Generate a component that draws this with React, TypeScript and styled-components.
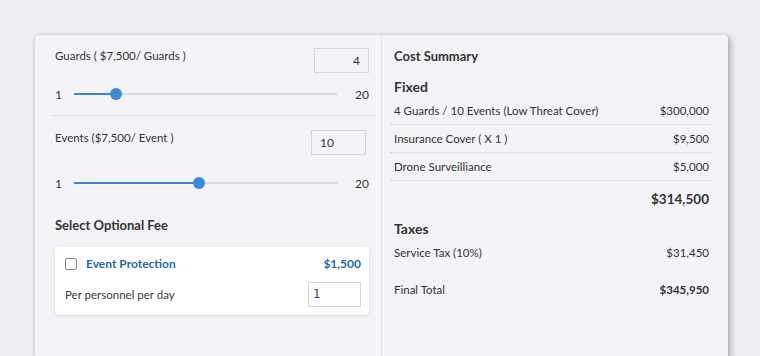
import React from "react";
import styled, { createGlobalStyle } from "styled-components";

const GlobalStyle = createGlobalStyle`
  html, body {
    margin: 0;
    padding: 0;
    background: #efeff3;
    font-family: Lato, "Open Sans", sans-serif;
    color: #333;
    overflow: hidden;
  }
`;

const Page = styled.div`
  padding: 35px 0 0 35px;
  height: 356px;
  box-sizing: border-box;
  overflow: hidden;
`;

const Card = styled.div`
  width: 693px;
  height: 321px;
  background: #f4f4f8;
  border-radius: 4px 4px 0 0;
  box-shadow: 0 1px 4px rgba(0, 0, 0, 0.18), 3px 2px 6px rgba(0, 0, 0, 0.22);
  display: grid;
  grid-template-columns: 347px 1fr;
`;

const LeftCol = styled.div`
  border-right: 1px solid #e3e3e8;
  padding: 13px 12px 0 20px;
`;

const RightCol = styled.div`
  padding: 13px 14px 0 8px;
`;

const Block = styled.div<{ $divider?: boolean }>`
  padding-bottom: 14px;
  margin-right: -7px;
  padding-right: 7px;
  margin-left: -5px;
  padding-left: 5px;
  border-bottom: ${(p) => (p.$divider ? "1px solid #e0e0e6" : "none")};
  margin-bottom: 14px;
`;

const Head = styled.div<{ $shift?: number }>`
  display: flex;
  justify-content: space-between;
  align-items: flex-start;
  padding-right: ${(p) => p.$shift ?? 0}px;
`;

const Label = styled.div`
  font-size: 11.5px;
  line-height: 14px;
  padding-top: 1px;
`;

const NumBox = styled.div<{ $align?: "left" | "right" }>`
  width: 55px;
  height: 25px;
  box-sizing: border-box;
  border: 1px solid #d6d6dc;
  background: #f4f4f8;
  font-size: 12px;
  line-height: 23px;
  padding: 0 8px;
  text-align: ${(p) => p.$align ?? "left"};
`;

const SliderRow = styled.div<{ $top: number }>`
  display: flex;
  align-items: center;
  margin-top: ${(p) => p.$top}px;
  height: 14px;
  font-size: 12px;
`;

const Track = styled.div`
  position: relative;
  flex: 1;
  height: 2px;
  background: #dcdce0;
  margin: 0 18px 0 12px;
`;

const Fill = styled.div`
  position: absolute;
  left: 0;
  top: 0;
  height: 2px;
  background: #3a86cc;
`;

const Thumb = styled.div`
  position: absolute;
  top: -5px;
  width: 12px;
  height: 12px;
  margin-left: -6px;
  border-radius: 50%;
  background: #3a8bd6;
`;

const SectionTitle = styled.div<{ $size?: number }>`
  font-weight: 700;
  font-size: ${(p) => p.$size ?? 13}px;
  line-height: 16px;
`;

const OptionCard = styled.div`
  margin-top: 14px;
  background: #fff;
  border-radius: 4px;
  box-shadow: 0 1px 3px rgba(0, 0, 0, 0.12);
  padding: 9px 8px 8px 10px;
`;

const OptionHead = styled.div`
  display: flex;
  align-items: center;
  gap: 9px;
  font-size: 12px;
  font-weight: 700;
  color: #1f6aa5;
`;

const Check = styled.span`
  width: 12px;
  height: 12px;
  box-sizing: border-box;
  border: 1px solid #8a8a8a;
  border-radius: 2px;
  background: #fff;
`;

const Price = styled.span`
  margin-left: auto;
`;

const OptionRow = styled.div`
  display: flex;
  align-items: center;
  justify-content: space-between;
  margin-top: 11px;
  font-size: 11.5px;
  color: #3a3a44;
`;

const SmallInput = styled.div`
  width: 53px;
  height: 25px;
  box-sizing: border-box;
  border: 1px solid #d8d8dc;
  font-family: "DejaVu Sans", sans-serif;
  font-size: 12px;
  line-height: 23px;
  padding: 0 4px;
  color: #3c3c5c;
`;

const Group = styled.div<{ $top: number }>`
  margin-top: ${(p) => p.$top}px;
  padding-left: 4px;
`;

const Rows = styled.div<{ $top: number }>`
  margin-top: ${(p) => p.$top}px;
`;

const Row = styled.div<{ $line?: boolean; $bold?: boolean; $h?: number }>`
  display: flex;
  justify-content: space-between;
  align-items: center;
  height: ${(p) => p.$h ?? 28}px;
  padding: 0 5px 0 4px;
  margin-left: -4px;
  font-size: 11.5px;
  font-weight: ${(p) => (p.$bold ? 700 : 400)};
  border-bottom: 1px dotted ${(p) => (p.$line ? "#d6d6dc" : "transparent")};
  box-sizing: border-box;
`;

const Total = styled.div`
  text-align: right;
  font-weight: 700;
  font-size: 13.5px;
  padding-right: 5px;
  margin-top: 10px;
`;

function Slider({ value, top }: { value: number; top: number }) {
  const pct = ((value - 1) / 19) * 100;
  return (
    <SliderRow $top={top}>
      <span>1</span>
      <Track>
        <Fill style={{ width: `${pct}%` }} />
        <Thumb style={{ left: `${pct}%` }} />
      </Track>
      <span>20</span>
    </SliderRow>
  );
}

export default function App() {
  return (
    <Page>
      <GlobalStyle />
      <Card>
        <LeftCol>
          <Block $divider>
            <Head>
              <Label>Guards ( $7,500/ Guards )</Label>
              <NumBox $align="right">4</NumBox>
            </Head>
            <Slider value={4} top={14} />
          </Block>
          <div>
            <Head $shift={3}>
              <Label>Events ($7,500/ Event )</Label>
              <NumBox>10</NumBox>
            </Head>
            <Slider value={10} top={21} />
          </div>
          <SectionTitle style={{ marginTop: 27 }}>Select Optional Fee</SectionTitle>
          <OptionCard>
            <OptionHead>
              <Check />
              <span>Event Protection</span>
              <Price>$1,500</Price>
            </OptionHead>
            <OptionRow>
              <span>Per personnel per day</span>
              <SmallInput>1</SmallInput>
            </OptionRow>
          </OptionCard>
        </LeftCol>
        <RightCol>
          <Group $top={0}>
            <SectionTitle>Cost Summary</SectionTitle>
          </Group>
          <Group $top={15}>
            <SectionTitle $size={14}>Fixed</SectionTitle>
            <Rows $top={2}>
              <Row $line>
                <span>4 Guards / 10 Events (Low Threat Cover)</span>
                <span>$300,000</span>
              </Row>
              <Row $line>
                <span>Insurance Cover ( X 1 )</span>
                <span>$9,500</span>
              </Row>
              <Row $line>
                <span>Drone Surveilliance</span>
                <span>$5,000</span>
              </Row>
            </Rows>
            <Total>$314,500</Total>
          </Group>
          <Group $top={14}>
            <SectionTitle $size={14}>Taxes</SectionTitle>
            <Rows $top={2}>
              <Row>
                <span>Service Tax (10%)</span>
                <span>$31,450</span>
              </Row>
              <Row $bold $h={46}>
                <span style={{ fontWeight: 400 }}>Final Total</span>
                <span>$345,950</span>
              </Row>
            </Rows>
          </Group>
        </RightCol>
      </Card>
    </Page>
  );
}
